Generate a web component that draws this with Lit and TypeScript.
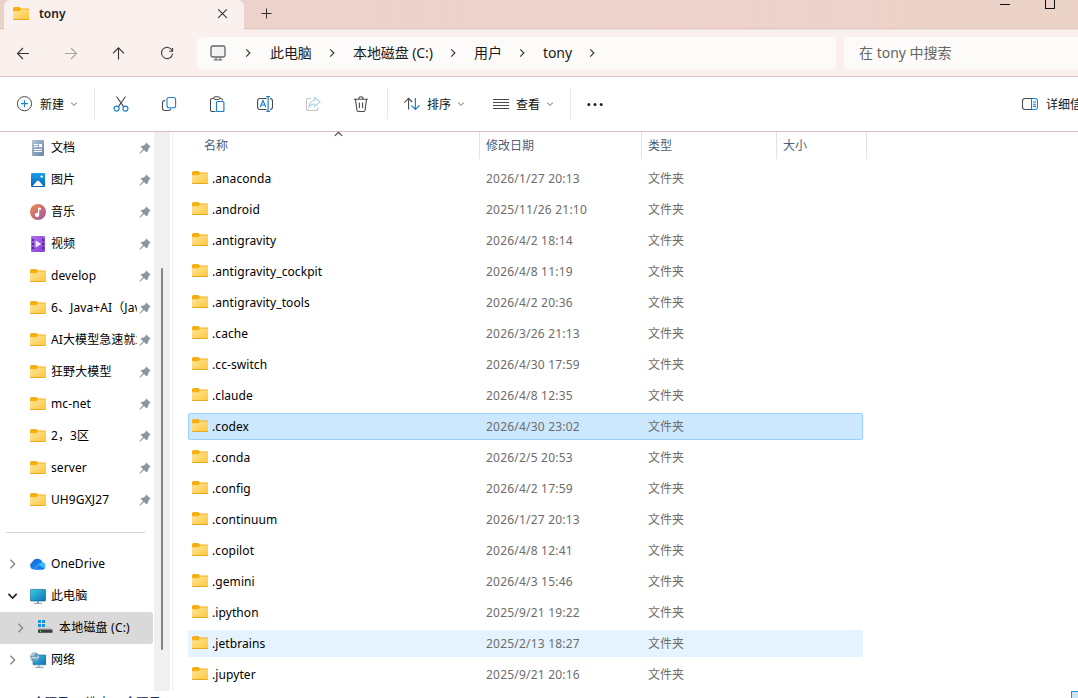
import { LitElement, html, css, svg, nothing, TemplateResult } from "lit";
import { customElement, property } from "lit/decorators.js";

type Row = { name: string; date: string; state?: string };

const FILES: Row[] = [
  { name: ".anaconda", date: "2026/1/27 20:13" },
  { name: ".android", date: "2025/11/26 21:10" },
  { name: ".antigravity", date: "2026/4/2 18:14" },
  { name: ".antigravity_cockpit", date: "2026/4/8 11:19" },
  { name: ".antigravity_tools", date: "2026/4/2 20:36" },
  { name: ".cache", date: "2026/3/26 21:13" },
  { name: ".cc-switch", date: "2026/4/30 17:59" },
  { name: ".claude", date: "2026/4/8 12:35" },
  { name: ".codex", date: "2026/4/30 23:02", state: "selected" },
  { name: ".conda", date: "2026/2/5 20:53" },
  { name: ".config", date: "2026/4/2 17:59" },
  { name: ".continuum", date: "2026/1/27 20:13" },
  { name: ".copilot", date: "2026/4/8 12:41" },
  { name: ".gemini", date: "2026/4/3 15:46" },
  { name: ".ipython", date: "2025/9/21 19:22" },
  { name: ".jetbrains", date: "2025/2/13 18:27", state: "hover" },
  { name: ".jupyter", date: "2025/9/21 20:16" },
];

const PINNED: [string, string][] = [
  ["doc", "文档"],
  ["picture", "图片"],
  ["music", "音乐"],
  ["video", "视频"],
  ["folder", "develop"],
  ["folder", "6、Java+AI（Java）"],
  ["folder", "AI大模型急速就业班"],
  ["folder", "狂野大模型"],
  ["folder", "mc-net"],
  ["folder", "2，3区"],
  ["folder", "server"],
  ["folder", "UH9GXJ27"],
];

const INK = "#4a4a4a";
const BLUE = "#1a80d4";

const ICONS: Record<string, TemplateResult> = {
  folder: svg`
    <defs><linearGradient id="g" x1="0" y1="0" x2="1" y2="1"><stop offset="0" stop-color="#ffe69c"/><stop offset="1" stop-color="#fdc737"/></linearGradient></defs>
    <path d="M0 2.6Q0 1 1.5 1H6.2L8 2.5H15Q16 2.5 16 3.6V6H0Z" fill="#f5b010"/>
    <path d="M0 5.2H6.4L8 3.6H16V13Q16 14 15 14H1Q0 14 0 13Z" fill="url(#g)"/>
    <path d="M.3 13.5H15.7" stroke="#e8a81f" stroke-width="1"/>`,
  doc: svg`
    <defs><linearGradient id="g" x1="0" y1="0" x2="1" y2="1"><stop offset="0" stop-color="#b4c5d8"/><stop offset="1" stop-color="#6883a6"/></linearGradient></defs>
    <rect x="2" y="0" width="12" height="16" rx="1.2" fill="url(#g)"/>
    <path d="M4 4.5H8M4 6.5H8M4 9.5H12M4 11.5H12" stroke="#fff" stroke-width="1"/><rect x="9" y="4" width="3" height="3.2" fill="#fff"/>`,
  picture: svg`
    <defs><linearGradient id="g" x1="0" y1="0" x2="0" y2="1"><stop offset="0" stop-color="#1ba2e8"/><stop offset="1" stop-color="#0b62b4"/></linearGradient></defs>
    <rect x="1" y="1" width="14" height="14" rx="1" fill="url(#g)"/>
    <path d="M2.6 14L7 9Q8 8 9 9L13.4 14Z" fill="#fff"/><circle cx="11.7" cy="4.6" r="1.2" fill="#fff"/>`,
  music: svg`
    <defs><linearGradient id="g" x1="0" y1="0" x2="1" y2="1"><stop offset="0" stop-color="#f3924b"/><stop offset=".5" stop-color="#cc6d73"/><stop offset="1" stop-color="#9b5bb0"/></linearGradient></defs>
    <circle cx="8" cy="8" r="8" fill="url(#g)"/><path d="M8 3.2L11 4.2V6L9.2 5.4V10.8A2.1 2.1 0 1 1 8 9Z" fill="#fff"/>`,
  video: svg`
    <defs><linearGradient id="g" x1="0" y1="0" x2="1" y2="1"><stop offset="0" stop-color="#b06ef2"/><stop offset="1" stop-color="#8140d8"/></linearGradient></defs>
    <rect x="1" y="0" width="14" height="16" rx="1.2" fill="url(#g)"/>
    <path d="M3 3V15M13 3V15" stroke="#40207e" stroke-width="1.6" stroke-dasharray="2 2"/><path d="M5.6 4.4L11.4 8L5.6 11.6Z" fill="#f2eaff"/>`,
  cloud: svg`
    <defs><linearGradient id="g" x1="0" y1="0" x2="1" y2="1"><stop offset="0" stop-color="#1557cc"/><stop offset=".5" stop-color="#1b7ff0"/><stop offset="1" stop-color="#35c3ff"/></linearGradient></defs>
    <path d="M4 13.5A4 4 0 0 1 2.3 6A5.6 5.6 0 0 1 12.5 6.2A3.8 3.8 0 0 1 12.5 13.5Z" fill="url(#g)"/>
    <path d="M4 13.5Q6.8 10.5 9 8.2Q10.5 6.3 12.6 6.2A3.8 3.8 0 0 1 12.5 13.5Z" fill="#39bdfb"/><path d="M4.2 13.5L9.2 9.2L14.8 12.8Q14 13.5 12.5 13.5Z" fill="#1b79ee"/>`,
  pc: svg`
    <defs><linearGradient id="g" x1="0" y1="0" x2="1" y2="1"><stop offset="0" stop-color="#36d0dc"/><stop offset="1" stop-color="#1270b8"/></linearGradient></defs>
    <rect x="0.4" y="1.4" width="15.2" height="11.6" rx=".8" fill="url(#g)" stroke="#1a6b95" stroke-width=".7"/>
    <path d="M7 13H9V15H7Z" fill="#8a98a5"/><path d="M4 15.4H12" stroke="#9aa5ad" stroke-width="1.1"/>`,
  drive: svg`
    <path d="M1 0H4V3H1ZM5 0H8V3H5ZM1 4H4V7H1ZM5 4H8V7H5Z" fill="#1593e8"/>
    <path d="M2 8H14L15.5 10.5H1Z" fill="#b9b9b9"/><rect x="1" y="9.6" width="14.5" height="3.2" fill="#3b3b3b"/><rect x="3" y="10.6" width="1.3" height="1.3" fill="#3cf06b"/>`,
  network: svg`
    <defs><linearGradient id="g" x1="0" y1="0" x2="1" y2="1"><stop offset="0" stop-color="#36c3dc"/><stop offset="1" stop-color="#1270b8"/></linearGradient></defs>
    <rect x="3" y="3" width="13" height="9.8" rx=".6" fill="url(#g)" stroke="#1a6b95" stroke-width=".6"/>
    <path d="M9 13V15M5.5 15.4H13.5" stroke="#9aa5ad" stroke-width="1.2"/>
    <circle cx="4.7" cy="5" r="4.6" fill="#6f9ebd"/><path d="M1.2 3.3Q3.6 3.5 4.4 1.1M1 6.9Q3.4 4.7 5.4 5.9T8.6 4.1" stroke="#d4e6ee" stroke-width="1.2" fill="none"/>`,
  pin: svg`<path d="M9.2 2.4L13.8 6.9L12.2 7.6L11 9.9L10.5 11.7L9.4 12.2L7 10L3.4 13.5L2.4 13.8L2.7 12.8L6.1 9.2L3.6 6.8L4.4 5.9L6.6 5.4L8.6 4.1Z" fill="#8b969d"/>`,
  right: svg`<path d="M6.4 3.8L10.6 8L6.4 12.2" fill="none" stroke="currentColor" stroke-width="1.5"/>`,
  crumb: svg`<path d="M6.2 4.3L9.9 8L6.2 11.7" fill="none" stroke="#333" stroke-width="1.15"/>`,
  down: svg`<path d="M4.5 5.9L8.6 10L12.7 5.9" fill="none" stroke="currentColor" stroke-width="1.7"/>`,
  up: svg`<path d="M4.8 9.9L8.5 6.3L12.2 9.9" fill="none" stroke="currentColor" stroke-width="1.1"/>`,
  tinyDown: svg`<path d="M5.2 6.7L8 9.3L10.8 6.7" fill="none" stroke="#929292" stroke-width="1.1"/>`,
  close: svg`<path d="M4.2 3.3L12.8 11.9M12.8 3.3L4.2 11.9" stroke="#333" stroke-width="1.05"/>`,
  plus: svg`<path d="M8.5 3.5V13.5M3.5 8.5H13.5" stroke="#333" stroke-width="1"/>`,
  back: svg`<path d="M14 8.5H2.6M8 3L2.5 8.5L8 14" fill="none" stroke="#333" stroke-width="1.1"/>`,
  forward: svg`<path d="M2 8.5H13.4M8 3L13.5 8.5L8 14" fill="none" stroke="#aaa3a2" stroke-width="1.1"/>`,
  upArrow: svg`<path d="M7.5 14.5V3.1M2 8.3L7.5 2.8L13 8.3" fill="none" stroke="#333" stroke-width="1.1"/>`,
  refresh: svg`<path d="M13.2 5.8A5.6 5.6 0 1 0 13.6 8.6M13.6 3V6.3H10.2" fill="none" stroke="#444" stroke-width="1.1"/>`,
  monitor: svg`<rect x="1" y="1" width="14" height="11" rx="1.8" fill="#f3f3f3" stroke="#666" stroke-width="1.3"/><path d="M6 12.5V14.5M10 12.5V14.5M3.8 14.8H12.2" stroke="#777" stroke-width="1.3"/>`,
  create: svg`<circle cx="7.5" cy="7.7" r="7.1" fill="none" stroke="${INK}"/><path d="M7.5 4.2V11.2M4 7.7H11" stroke="${BLUE}" stroke-width="1.2"/>`,
  cut: svg`<path d="M3.5 .5L10.6 10.6M12.5 .5L5.4 10.6" stroke="${INK}" stroke-width="1.1"/><circle cx="3.6" cy="12.6" r="2.5" fill="none" stroke="${BLUE}" stroke-width="1.2"/><circle cx="12.4" cy="12.6" r="2.5" fill="none" stroke="${BLUE}" stroke-width="1.2"/>`,
  copy: svg`<path d="M4.2 4.6H3.3Q1.5 4.8 1.5 6.6V12Q1.5 14.5 4 14.5H7.6Q9.4 14.4 10 12.6" fill="none" stroke="${INK}" stroke-width="1.1"/><rect x="6" y="1.5" width="8.6" height="10.2" rx="2" fill="none" stroke="${BLUE}" stroke-width="1.1"/>`,
  paste: svg`<path d="M5 2.5H3Q1.5 2.5 1.5 4V14Q1.5 15.5 3 15.5H6.5M10.5 2.5H12Q13.5 2.5 13.5 4.5" fill="none" stroke="${INK}" stroke-width="1.1"/><rect x="4.7" y=".8" width="6.2" height="2.6" rx="1.2" fill="#fff" stroke="${INK}"/><rect x="7.5" y="5.5" width="7.4" height="10" rx="1" fill="#fff" stroke="${BLUE}" stroke-width="1.2"/>`,
  rename: svg`<path d="M9.5 2.5H3Q.6 2.5.6 5V11Q.6 13.5 3 13.5H9.5M13 2.5Q15.5 2.5 15.5 5V11Q15.5 13.5 13 13.5" fill="none" stroke="${INK}" stroke-width="1.1"/><path d="M3.2 11L6 4.6L8.8 11M4.2 9H7.8" fill="none" stroke="${BLUE}" stroke-width="1.2"/><path d="M9.2 .6H13M11.1 .6V15.4M9.2 15.4H13" stroke="${BLUE}" stroke-width="1.2"/>`,
  share: svg`<path d="M6 2.5H3.5Q1.5 2.5 1.5 4.5V12.5Q1.5 14.5 3.5 14.5H11Q13 14.5 13 12.5V11.5" fill="none" stroke="#c2c2c2" stroke-width="1.1"/><path d="M9.7 1.6L15 6.1L9.7 10.5V8Q6.4 7.6 4.2 10.8Q4.6 5 9.7 4.3Z" fill="none" stroke="#a6cff0" stroke-width="1.1"/>`,
  trash: svg`<path d="M1 3.2H15M5.8 3Q5.8 .8 8 .8T10.2 3M2.5 3.4L3.9 14Q4.1 15.5 5.5 15.5H10.5Q11.9 15.5 12.1 14L13.5 3.4M6.4 6.5V12M9.6 6.5V12" fill="none" stroke="${INK}" stroke-width="1.1"/>`,
  sort: svg`<path d="M4.6 13.5V2.6M.3 6.7L4.6 2.4L8.2 6" fill="none" stroke="${INK}" stroke-width="1.1"/><path d="M11.4 2V13.2M7.3 9.3L11.4 13.4L15.6 9.3" fill="none" stroke="${BLUE}" stroke-width="1.2"/>`,
  view: svg`<path d="M0 3.5H16M0 6.5H16M0 9.5H16M0 12.5H16" stroke="${INK}" stroke-width="1"/>`,
  more: svg`<g fill="#222"><circle cx="1.8" cy="8.6" r="1.5"/><circle cx="8" cy="8.6" r="1.5"/><circle cx="14.2" cy="8.6" r="1.5"/></g>`,
  details: svg`<path d="M9.5 2.5H3Q.5 2.5.5 5V11Q.5 13.5 3 13.5H9.5" fill="none" stroke="${INK}" stroke-width="1.1"/><path d="M9.5 2.5H13Q15.5 2.5 15.5 5V11Q15.5 13.5 13 13.5H9.5ZM11 6H14M11 8.2H14M11 10.4H14" fill="none" stroke="${BLUE}" stroke-width="1.1"/>`,
  minimize: svg`<path d="M3 4.5H13" stroke="#111" stroke-width="1"/>`,
  maximize: svg`<rect x="3.5" y="-.5" width="9" height="9" fill="none" stroke="#111" stroke-width="1"/>`,
};

@customElement("ui-icon")
export class UiIcon extends LitElement {
  @property() name = "folder";
  static styles = css`
    :host { display: block; width: 16px; height: 16px; flex: none; }
    .glyph { display: block; width: 16px; height: 16px; }
  `;
  render() {
    return html`<svg class="glyph" viewBox="0 0 16 16">${ICONS[this.name] ?? nothing}</svg>`;
  }
}

@customElement("app-root")
export class AppRoot extends LitElement {
  static styles = css`
    :host {
      display: flex; flex-direction: column; width: 1078px; height: 698px; overflow: hidden;
      background: #fff; color: #111;
      font: 12px/16px "Noto Sans", "Noto Sans CJK SC", sans-serif;
    }
    * { box-sizing: border-box; }
    .tabs {
      display: flex; height: 30px; flex: none; padding-left: 4px;
      background: linear-gradient(90deg, #ecd3ca, #eed2cc 60%, #ebd3c8);
      border-bottom: 1px solid #f1e0dc; box-shadow: inset 0 -1px #dfc7c0;
    }
    .tab {
      display: flex; align-items: center; width: 240px; height: 30px; padding: 0 14px 3px 9px;
      background: #faf1ef; border-radius: 6px 6px 0 0; color: #222; font-weight: 600;
      box-shadow: 0 0 1px #d5b9b1;
    }
    .tab-title { flex: 1; padding: 1px 0 0 10px; font-size: 12px; }
    .newtab { margin: 5px 0 0 14px; }
    .window { display: flex; margin-left: auto; gap: 29px; padding-right: 20px; }
    .nav {
      display: flex; align-items: center; height: 47px; flex: none; padding: 0 0 1px 15px;
      background: #faf1ef; border-bottom: 1px solid #dccac6;
    }
    .nav-buttons { display: flex; gap: 32px; width: 182px; flex: none; }
    .address, .search {
      display: flex; align-items: center; height: 32px; background: #fcfbf9; border-radius: 5px;
      font-size: 14px; line-height: 20px; color: #1b1b1b; flex: none;
    }
    .address { width: 639px; padding-left: 13px; white-space: nowrap; }
    .crumb { padding-top: 1px; letter-spacing: -0.1px; flex: none; }
    .crumb.c0 { width: 42px; } .crumb.c1 { width: 80px; } .crumb.c2 { width: 28px; } .crumb.c3 { width: 29px; }
    .crumb-sep { margin: 0 13px 0 12px; }
    .crumb-sep.s0 { margin: 0 14px; }
    .search { width: 260px; margin-left: 8px; padding: 1px 0 0 15px; color: #666; white-space: nowrap; }
    .tools {
      display: flex; align-items: center; height: 55px; flex: none; padding-left: 17px; background: #fff;
      border-bottom: 1px solid #d3c2bf; color: #111; white-space: nowrap;
    }
    .command { display: flex; align-items: center; flex: none; }
    .label { padding: 1px 0 0 7px; width: 33px; flex: none; }
    .rule { width: 1px; height: 31px; background: #e8e8e8; flex: none; margin-top: -1px; }
    .rule.after { margin-left: 12px; }
    .actions { display: flex; gap: 32px; padding: 0 18px; flex: none; }
    .sort { margin-left: 16px; }
    .view { margin-left: 24px; }
    .more { margin-left: 16px; }
    .details { margin-left: 419px; }
    .details .label { width: auto; padding-left: 8px; }
    .main { display: flex; flex: 1; min-height: 0; }
    .side { width: 154px; display: flex; flex-direction: column; letter-spacing: 0.1px; }
    .place { display: flex; align-items: center; height: 32px; flex: none; color: #000; padding-left: 30px; }
    .place-name { margin-left: 5px; width: 86px; overflow: hidden; white-space: nowrap; }
    .divider { height: 1px; background: #d4d4d4; margin: 16px 9px 15px 6px; flex: none; }
    .tree { display: flex; align-items: center; height: 32px; width: 153px; flex: none; padding-left: 4px; color: #000; border-radius: 0 3px 3px 0; white-space: nowrap; }
    .tree.child { padding-left: 12px; background: #d9d9d9; }
    .twist { color: #8a8a8a; margin-right: 10px; }
    .twist.open { color: #222; }
    .child .twist { margin-right: 9px; }
    .tree-name { margin-left: 5px; }
    .child .tree-name { margin-left: 6px; letter-spacing: 0.2px; }
    .track { width: 16px; height: 559px; background: #f0f0f0; padding: 136px 0 0 7px; }
    .thumb { width: 2px; height: 382px; background: #858585; border-radius: 1px; }
    .gap { width: 3px; height: 559px; border-right: 1px solid #f3f3f3; }
    .files { flex: 1; padding-left: 15px; position: relative; }
    .head { display: grid; grid-template-columns: 292px 162px 135px 90px; height: 27px; color: #4c607a; }
    .cell { padding: 6px 0 0 6px; border-right: 1px solid #e2e2e2; }
    .cell.first { padding-left: 16px; }
    .sorted { position: absolute; left: 157px; top: -6px; color: #444; }
    .list { display: flex; flex-direction: column; gap: 4px; padding-top: 6px; }
    .row {
      display: grid; grid-template-columns: 20px 274px 162px 1fr; align-items: center;
      width: 675px; height: 27px; padding-left: 3px; border: 1px solid transparent; border-radius: 2px;
      white-space: nowrap;
    }
    .row.selected { background: #cce8ff; border-color: #99d1ff; }
    .row.hover { background: #e5f3ff; }
    .row-icon { margin-bottom: 1px; }
    .file-name { color: #000; letter-spacing: 0.08px; }
    .date, .kind { color: #6d6d6d; }
    .date { letter-spacing: 0.21px; }
    .status { display: flex; gap: 16px; position: absolute; left: 15px; top: 695px; height: 3px; overflow: hidden; color: #1d2b50; white-space: nowrap; letter-spacing: 0.3px; }
    .layout { position: absolute; left: 1071px; top: 691px; width: 7px; height: 7px; border: solid #2a94cc; border-width: 1px 0 0 1px; background: #cbe6f6; }
  `;

  private icon(name: string, cls = "") {
    return html`<ui-icon class=${cls} name=${name}></ui-icon>`;
  }

  render() {
    const crumbs = ["此电脑", "本地磁盘 (C:)", "用户", "tony"];
    return html`
      <div class="tabs">
        <div class="tab">${this.icon("folder")}<span class="tab-title">tony</span>${this.icon("close")}</div>
        ${this.icon("plus", "newtab")}
        <div class="window">${this.icon("minimize")}${this.icon("maximize")}</div>
      </div>
      <div class="nav">
        <div class="nav-buttons">${["back", "forward", "upArrow", "refresh"].map((n) => this.icon(n))}</div>
        <div class="address">
          ${this.icon("monitor")}${this.icon("crumb", "crumb-sep s0")}
          ${crumbs.map((c, i) => html`<span class="crumb c${i}">${c}</span>${this.icon("crumb", "crumb-sep")}`)}
        </div>
        <div class="search">在 tony 中搜索</div>
      </div>
      <div class="tools">
        <div class="command new">${this.icon("create")}<span class="label">新建</span>${this.icon("tinyDown")}</div>
        <div class="rule after"></div>
        <div class="actions">${["cut", "copy", "paste", "rename", "share", "trash"].map((n) => this.icon(n))}</div>
        <div class="rule"></div>
        <div class="command sort">${this.icon("sort")}<span class="label">排序</span>${this.icon("tinyDown")}</div>
        <div class="command view">${this.icon("view")}<span class="label">查看</span>${this.icon("tinyDown")}</div>
        <div class="rule after"></div>
        ${this.icon("more", "more")}
        <div class="command details">${this.icon("details")}<span class="label">详细信息</span></div>
      </div>
      <div class="main">
        <div class="side">
          ${PINNED.map(([i, n]) => html`<div class="place">${this.icon(i)}<span class="place-name">${n}</span>${this.icon("pin")}</div>`)}
          <div class="divider"></div>
          <div class="tree">${this.icon("right", "twist")}${this.icon("cloud")}<span class="tree-name">OneDrive</span></div>
          <div class="tree">${this.icon("down", "twist open")}${this.icon("pc")}<span class="tree-name">此电脑</span></div>
          <div class="tree child">${this.icon("right", "twist")}${this.icon("drive")}<span class="tree-name">本地磁盘 (C:)</span></div>
          <div class="tree">${this.icon("right", "twist")}${this.icon("network")}<span class="tree-name">网络</span></div>
        </div>
        <div class="track"><div class="thumb"></div></div>
        <div class="gap"></div>
        <div class="files">
          ${this.icon("up", "sorted")}
          <div class="head"><div class="cell first">名称</div><div class="cell">修改日期</div><div class="cell">类型</div><div class="cell">大小</div></div>
          <div class="list">
            ${FILES.map((f) => html`<div class="row ${f.state ?? ""}">${this.icon("folder", "row-icon")}<span class="file-name">${f.name}</span><span class="date">${f.date}</span><span class="kind">文件夹</span></div>`)}
          </div>
        </div>
      </div>
      <div class="status"><span>41 个项目</span><span>选中 1 个项目</span></div>
      <div class="layout"></div>
    `;
  }
}
